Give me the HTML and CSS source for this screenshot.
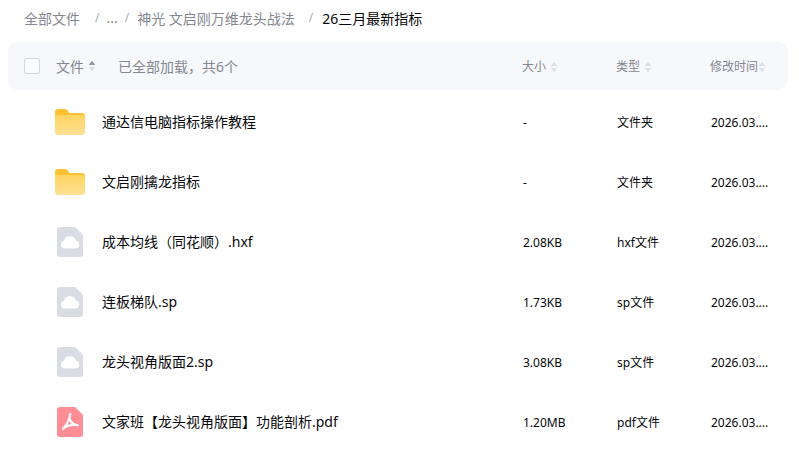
FILE: index.html
```html
<!DOCTYPE html>
<html lang="zh-CN">
<head>
<meta charset="utf-8">
<title>26三月最新指标</title>
<link rel="stylesheet" href="styles.css">
</head>
<body>
<svg class="defs" width="0" height="0" aria-hidden="true">
  <defs>
    <linearGradient id="fb" x1="0" y1="0" x2="0" y2="1"><stop offset="0" stop-color="#ffd35f"/><stop offset="1" stop-color="#ffe196"/></linearGradient>
    <symbol id="folder" viewBox="0 0 30 26">
      <path d="M0 3a3 3 0 0 1 3-3h6.500c1.500 0 2.500.6 3.400 1.800L14.500 4H27a3 3 0 0 1 3 3v4H0z" fill="#ffc233"/>
      <path d="M0 6h27a3 3 0 0 1 3 3v14a3 3 0 0 1-3 3H3a3 3 0 0 1-3-3z" fill="url(#fb)"/>
    </symbol>
    <symbol id="cloud" viewBox="0 0 26 30">
      <path d="M3 0h15l8 8v19a3 3 0 0 1-3 3H3a3 3 0 0 1-3-3V3a3 3 0 0 1 3-3z" fill="#d9dce2"/>
      <path d="M7.500 21.500a3.800 3.800 0 0 1-.6-7.500 6.300 6.300 0 0 1 12.100-.5 4.100 4.100 0 0 1 .2 8z" fill="#fff"/>
    </symbol>
    <symbol id="pdf" viewBox="0 0 26 30">
      <path d="M3 0h15l8 8v19a3 3 0 0 1-3 3H3a3 3 0 0 1-3-3V3a3 3 0 0 1 3-3z" fill="#ff8d96"/>
      <path d="M13.200 7c-.4 4.700-3.300 10.500-7.200 15M12.800 12.500c1.500 3.300 4 5.300 8 5.800M6.500 21.500c3.500-3.300 8-4 14-3.500" fill="none" stroke="#fff" stroke-width="2.200" stroke-linecap="round" stroke-linejoin="round"/>
    </symbol>
    <symbol id="sort" viewBox="0 0 8 12">
      <path d="M4 .8 7.200 5H.8z" fill="currentColor"/>
      <path d="M4 11.200.8 7h6.400z" fill="#dcdfe6"/>
    </symbol>
  </defs>
</svg>
<nav class="crumbs">
  <span class="crumb first">全部文件</span><span class="sep sep-a">/</span>
  <span class="crumb">...</span><span class="sep sep-b">/</span>
  <span class="crumb">神光 文启刚万维龙头战法</span><span class="sep sep-c">/</span>
  <span class="current">26三月最新指标</span>
</nav>
<main class="table">
  <header class="row head">
    <div class="c-name">
      <span class="check"></span>
      <span class="h-file">文件</span>
      <svg class="sort sort-on"><use href="#sort"/></svg>
      <span class="loaded">已全部加载，共6个</span>
    </div>
    <div class="c-size">大小<svg class="sort"><use href="#sort"/></svg></div>
    <div class="c-type">类型<svg class="sort"><use href="#sort"/></svg></div>
    <div class="c-time">修改时间<svg class="sort tight"><use href="#sort"/></svg></div>
  </header>
  <div class="row item">
    <div class="c-name"><svg class="ic-folder"><use href="#folder"/></svg><span class="title">通达信电脑指标操作教程</span></div>
    <div class="c-size">-</div><div class="c-type">文件夹</div><div class="c-time">2026.03....</div>
  </div>
  <div class="row item">
    <div class="c-name"><svg class="ic-folder"><use href="#folder"/></svg><span class="title">文启刚擒龙指标</span></div>
    <div class="c-size">-</div><div class="c-type">文件夹</div><div class="c-time">2026.03....</div>
  </div>
  <div class="row item">
    <div class="c-name"><svg class="ic-file"><use href="#cloud"/></svg><span class="title">成本均线（同花顺）.hxf</span></div>
    <div class="c-size">2.08KB</div><div class="c-type">hxf文件</div><div class="c-time">2026.03....</div>
  </div>
  <div class="row item">
    <div class="c-name"><svg class="ic-file"><use href="#cloud"/></svg><span class="title">连板梯队.sp</span></div>
    <div class="c-size">1.73KB</div><div class="c-type">sp文件</div><div class="c-time">2026.03....</div>
  </div>
  <div class="row item">
    <div class="c-name"><svg class="ic-file"><use href="#cloud"/></svg><span class="title">龙头视角版面2.sp</span></div>
    <div class="c-size">3.08KB</div><div class="c-type">sp文件</div><div class="c-time">2026.03....</div>
  </div>
  <div class="row item">
    <div class="c-name"><svg class="ic-file"><use href="#pdf"/></svg><span class="title">文家班【龙头视角版面】功能剖析.pdf</span></div>
    <div class="c-size">1.20MB</div><div class="c-type">pdf文件</div><div class="c-time">2026.03....</div>
  </div>
</main>
</body>
</html>
```
FILE: styles.css
```css
* { box-sizing: border-box; }
html, body { margin: 0; height: 100%; overflow: hidden; background: #fff; }
body { width: 799px; height: 455px; font-family: "Noto Sans", "Noto Sans CJK SC", sans-serif; color: #06070a; }
.defs { display: block; height: 0; }
.crumbs { height: 42px; padding: 0 0 7px 24px; display: flex; align-items: center; font-size: 14px; color: #84878f; }
.crumb { white-space: nowrap; }
.sep { color: #a3a6ad; font-size: 12px; }
.sep-a { margin: 0 7px 0 15px; }
.sep-b { margin: 0 8px 0 7px; }
.sep-c { margin: 0 9px 0 14px; }
.current { color: #06070a; font-size: 14px; }
.table { margin: 0 11px 0 8px; width: 780px; }
.row { display: grid; grid-template-columns: 514px 94px 94px 78px; align-items: center; }
.head { height: 48px; background: #f7f8fc; border-radius: 10px; font-size: 12px; color: #84878f; margin-bottom: 2px; }
.item { height: 60px; font-size: 13px; }
.c-name { display: flex; align-items: center; min-width: 0; }
.check { width: 16px; height: 16px; margin-left: 16px; border: 1px solid #d5d6e0; border-radius: 3px; background: #fafbfd; }
.h-file { margin-left: 16px; font-size: 14px; }
.loaded { margin-left: 22px; font-size: 14px; }
.sort { width: 8px; height: 12px; margin-left: 4px; color: #dcdfe6; vertical-align: -2px; }
.sort-on { color: #8f929b; margin-left: 4px; }
.sort.tight { margin-left: 0; }
.ic-folder { width: 30px; height: 26px; margin-left: 47px; margin-bottom: 1px; }
.ic-file { width: 26px; height: 30px; margin-left: 49px; }
.ic-folder + .title { margin-left: 17px; }
.ic-file + .title { margin-left: 19px; }
.title { font-size: 14px; white-space: nowrap; padding-bottom: 2px; }
.c-type { font-size: 12px; }
.c-size, .c-time { font-size: 12px; white-space: nowrap; }
.item .c-size, .item .c-time, .item .c-type { padding-left: 1px; }
```
